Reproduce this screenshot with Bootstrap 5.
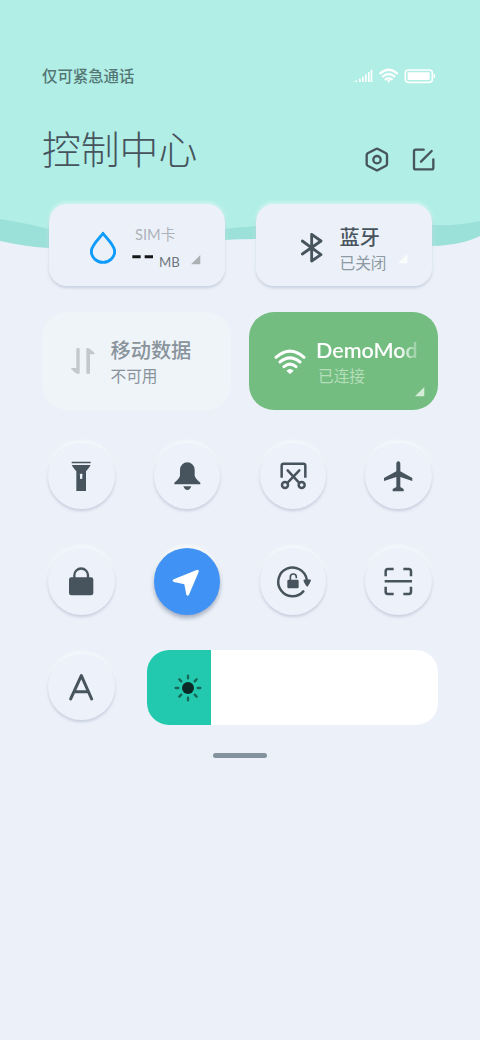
<!DOCTYPE html>
<html lang="zh-CN">
<head>
<meta charset="utf-8">
<meta name="viewport" content="width=device-width, initial-scale=1">
<title>控制中心</title>
<link href="https://cdn.jsdelivr.net/npm/bootstrap@5.3.0/dist/css/bootstrap.min.css" rel="stylesheet">
<style>
  body { background: #ecf1f9; color: #47545d; font-family: "Lato", "Noto Sans CJK SC", sans-serif; }
  .panel { width: 480px; height: 1040px; padding: 0 42px; isolation: isolate; }
  .wave { z-index: -1; }
  .status { height: 20px; margin-top: 66px; font-size: 15.4px; line-height: 20px; color: #547674; font-weight: 500; }
  .heading { height: 56px; margin-top: 35px; }
  .heading h1 { font-size: 38.8px; line-height: 56px; font-weight: 300; color: #47545d; }
  .tile { border-radius: 18px; width: 176px; height: 82px; background: #ecf1f9; box-shadow: 0 2px 3px rgba(120,135,165,.3), 0 -2px 4px rgba(240,255,252,.55); }
  .tile-lg { border-radius: 25px; width: 189px; height: 97.5px; }
  .quiet { background: #eff4f9; color: #89939b; }
  .online { background: #73bd80; color: #fff; }
  .name { font-size: 20.2px; line-height: 26px; font-weight: 500; white-space: nowrap; }
  .note { font-size: 15.7px; line-height: 22px; white-space: nowrap; }
  .fade-end { width: 104px; font-size: 21.5px; font-weight: 600; -webkit-mask-image: linear-gradient(90deg,#000 80%,rgba(0,0,0,.15) 100%); mask-image: linear-gradient(90deg,#000 80%,rgba(0,0,0,.15) 100%); }
  .knob { width: 66.67px; height: 66.67px; background: #edf1f9; box-shadow: 0 2px 3px rgba(120,135,165,.32), 0 -3px 3px rgba(245,250,252,.75); color: #47545d; }
  .knob svg { display: block; width: 100%; height: 100%; }
  .knob-active { background: #4092f5; color: #fff; box-shadow: 0 3px 4px rgba(90,105,135,.5), 0 -3px 3px rgba(249,252,250,.9); }
  .knob-row { padding: 0 6px 0 6px; height: 66.67px; }
  .slider { width: 291px; height: 75px; border-radius: 22px; background: #fff; }
  .slider-fill { background: #23c9af; }
  .handle { width: 53.5px; height: 5px; background: #84929d; }
  svg { flex: none; }
</style>
</head>
<body>
<main class="panel position-relative overflow-hidden d-flex flex-column">
  <svg class="wave position-absolute top-0 start-0" width="480" height="260" viewBox="0 0 480 260" aria-hidden="true">
    <path fill="#9be1d9" d="M0 210V241Q28 247 49 248C120 250 170 243 225 240Q245 239 260 239C330 237 370 248 432 246Q462 245 480 236V200Z"/>
    <path fill="#b0eee6" d="M0 0H480V221Q460 226 432 225C370 224 320 224 256 226C190 231 150 242 49 229Q25 223 0 219Z"/>
  </svg>

  <div class="status d-flex justify-content-between flex-shrink-0">
    <span>仅可紧急通话</span>
    <svg width="84" height="20" viewBox="0 0 252 60" fill="#fff">
      <path d="M0 48l9-6v6zM15 38h5v10h-5zM24 32h5v16h-5zM33 25h5v23h-5zM42 18h5v30h-5zM50 11h5v37h-5z"/>
      <g fill="none" stroke="#fff" stroke-width="7" stroke-linecap="round"><path d="M79 22Q104 1 129 22M87 31Q104 18 121 31M95 40Q104 34 113 40"/></g>
      <circle cx="104" cy="45" r="4"/>
      <rect x="154" y="12" width="81" height="37" rx="9" fill="none" stroke="#fff" stroke-width="5"/>
      <rect x="161" y="19" width="66" height="23" rx="3"/><path d="M239 23q5 0 5 7t-5 7z"/>
    </svg>
  </div>

  <header class="heading d-flex justify-content-between flex-shrink-0">
    <h1 class="mb-0">控制中心</h1>
    <svg width="78" height="60" viewBox="0 0 234 180" fill="none" stroke="#47545d" stroke-width="7" stroke-linejoin="round" stroke-linecap="round" style="margin:3px 1px 0 0">
      <path d="M54 79Q57 77 60 79L84 92Q87 94 87 98V124Q87 127 84 129L60 142Q57 144 54 142L29 129Q26 127 26 124V98Q26 94 29 92Z" transform="translate(-3 -4)"/>
      <circle cx="54" cy="107" r="11"/>
      <path d="M194 77H170Q165 77 165 82V131Q165 136 170 136H218Q223 136 223 131V106M218 81L186 113"/>
    </svg>
  </header>

  <section class="d-flex justify-content-between flex-shrink-0" style="margin:27px 6px 0 7px">
    <div class="tile d-flex">
      <svg width="26" height="33" viewBox="0 0 78 99" fill="none" stroke="#0e9bfa" stroke-width="8.5" stroke-linejoin="round" style="margin:27px 0 0 41px"><path d="M39 7C34 16 4 42 4 61A35 33 0 0 0 74 61C74 42 44 16 39 7Z"/></svg>
      <div class="flex-grow-1" style="padding:18.5px 0 0 19px">
        <div class="note" style="color:#aeb3b9;font-size:14.7px;line-height:22px">SIM卡</div>
        <div class="d-flex" style="margin-left:-3px">
          <svg width="22" height="22" viewBox="0 0 66 66" fill="#151719" style="margin-top:4px"><path d="M1 19h25v9H1zM38 19h25v9H38z"/></svg>
          <span style="font-size:13.2px;line-height:34px;margin-left:5px;color:#6e767d">MB</span>
          <svg width="10" height="10" viewBox="0 0 30 30" fill="#abb0b4" style="margin:10px 0 0 11px"><path d="M28 0V25Q28 28 25 28H0Z"/></svg>
        </div>
      </div>
    </div>
    <div class="tile d-flex">
      <svg width="22" height="30" viewBox="0 0 66 90" fill="none" stroke="#47545d" stroke-width="8.5" stroke-linejoin="round" stroke-linecap="round" style="margin:29px 0 0 45px"><path d="M4 24L60 65L32 84V4L60 24L4 63"/></svg>
      <div style="padding:20px 0 0 16.5px">
        <div class="name">蓝牙</div>
        <div class="d-flex">
          <span class="note" style="color:#8d99a3;line-height:26px">已关闭</span>
          <svg width="10" height="10" viewBox="0 0 30 30" fill="#fafcfc" style="margin:4px 0 0 11px"><path d="M28 0V25Q28 28 25 28H0Z"/></svg>
        </div>
      </div>
    </div>
  </section>

  <section class="d-flex justify-content-between flex-shrink-0" style="margin:26px 0 0">
    <div class="tile-lg quiet d-flex">
      <svg width="24" height="28" viewBox="0 0 72 84" fill="#c2c8cc" style="margin:35px 0 0 29px"><path d="M16 7q0-4 4-4h2q4 0 4 4V77q0 4-5 4Q13 79 0 65Q0 63 3 63H16zM46 7q0-5 5-4Q59 6 71 19Q72 22 69 22H57V77q0 4-4 4h-3q-4 0-4-4z"/></svg>
      <div style="padding:25px 0 0 15.5px">
        <div class="name">移动数据</div>
        <div class="note" style="line-height:27px">不可用</div>
      </div>
    </div>
    <div class="tile-lg online position-relative d-flex">
      <svg width="32" height="26" viewBox="0 0 96 78" fill="none" stroke="#fff" stroke-width="9" stroke-linecap="round" style="margin:37px 0 0 25px"><path d="M6 25Q48-12 90 25M18 39Q48 14 78 39M30 53Q48 38 66 53"/><path fill="#fff" stroke="none" d="M37 65Q48 55 59 65L51 73Q48 76 45 73Z"/></svg>
      <div style="padding:25px 0 0 10px">
        <div class="name fade-end">DemoMod</div>
        <div class="note" style="line-height:27px;margin-left:2px;color:#b6deba">已连接</div>
      </div>
      <svg class="position-absolute" width="10" height="10" viewBox="0 0 30 30" fill="#d5edd7" style="right:13px;bottom:13px"><path d="M28 0V25Q28 28 25 28H0Z"/></svg>
    </div>
  </section>

  <section class="knob-row d-flex justify-content-between flex-shrink-0" style="margin-top:33px">
    <div class="knob rounded-circle"><svg viewBox="-100 -100 200 200" fill="currentColor"><path d="M-29-44H28V-39H-29ZM-29-34H28Q24-26 14-15V44H-15V-15Q-25-26-29-34Z"/><rect x="-4" y="-8" width="7" height="16" rx="2" fill="#edf2f9"/></svg></div>
    <div class="knob rounded-circle"><svg viewBox="-100 -100 200 200" fill="currentColor"><path d="M-22-20A22 22 0 0 1 22-20V-3Q22 6 39 19V24H-39V19Q-22 6-22-3ZM-12 30H12Q8 41 0 41T-12 30Z"/></svg></div>
    <div class="knob rounded-circle"><svg viewBox="-100 -100 200 200" fill="none" stroke="currentColor" stroke-width="7.5" stroke-linecap="round"><path stroke-linecap="butt" d="M-35 4V-32Q-35-38-29-38H30Q36-38 36-32V4"/><path d="M-17-18L17 19M18-18L-17 19"/><circle cx="-25" cy="26" r="9"/><circle cx="25" cy="26" r="9"/></svg></div>
    <div class="knob rounded-circle"><svg viewBox="-100 -100 200 200" fill="currentColor"><path d="M-6-39Q-5-45 0-45T6-39V-15L42 5V14L6 2V32L16 38V45H-17V38L-6 32V2L-43 14V5L-6-15Z"/></svg></div>
  </section>

  <section class="knob-row d-flex justify-content-between flex-shrink-0" style="margin-top:39.1px">
    <div class="knob rounded-circle"><svg viewBox="-100 -100 200 200" fill="currentColor"><rect x="-37" y="-12" width="73" height="54" rx="7"/><path d="M-21-8V-18A20 20 0 0 1 20-18V-8" fill="none" stroke="currentColor" stroke-width="7"/></svg></div>
    <div class="knob knob-active rounded-circle"><svg viewBox="-100 -100 200 200" fill="currentColor"><path d="M28-34Q35-36 34-28L5 40Q1 46-3 40L-9 9L-40 2Q-48-2-41-6Z"/></svg></div>
    <div class="knob rounded-circle"><svg viewBox="-100 -100 200 200" fill="none" stroke="currentColor" stroke-width="7.5"><path stroke-linecap="round" d="M30 30A43 43 0 1 1 40-6"/><path fill="currentColor" stroke="none" d="M31-5Q42-8 53-5Q54-2 44 14Q42 17 39 14Q29-1 31-5Z"/><rect x="-18" y="-5" width="34" height="26" rx="4" fill="currentColor" stroke="none"/><path stroke-width="5" d="M-9-3V-13Q-9-22 0-22T9-13V-9"/></svg></div>
    <div class="knob rounded-circle"><svg viewBox="-100 -100 200 200" fill="none" stroke="currentColor" stroke-width="7.5"><path d="M-38-15V-30Q-38-37-31-37H-14M15-37H31Q38-37 38-30V-15M38 16V31Q38 38 31 38H15M-14 38H-31Q-38 38-38 31V16M-41 0H41"/></svg></div>
  </section>

  <section class="d-flex justify-content-between align-items-center flex-shrink-0" style="margin-top:34.7px;padding-left:6px">
    <div class="knob rounded-circle"><svg viewBox="-100 -100 200 200" fill="none" stroke="currentColor" stroke-width="9" stroke-linecap="round" stroke-linejoin="round"><path d="M-32 35L0-35L31 35M-22 13H22"/></svg></div>
    <div class="slider d-flex overflow-hidden">
      <div class="slider-fill h-100" style="width:22%">
        <svg width="28" height="28" viewBox="-42 -42 84 84" style="margin:24px 0 0 27px"><circle r="18" fill="#092a25"/><path fill="none" stroke="#176658" stroke-width="7" stroke-linecap="round" d="M0-37V-29M0 29V37M-37 0H-29M29 0H37M-26-26L-20-20M20 20L26 26M-26 26L-20 20M20-20L26-26"/></svg>
      </div>
    </div>
  </section>
  <div class="handle rounded-pill mx-auto flex-shrink-0" style="margin-top:28.4px"></div>
</main>
<script src="https://cdn.jsdelivr.net/npm/bootstrap@5.3.0/dist/js/bootstrap.bundle.min.js"></script>
</body>
</html>
